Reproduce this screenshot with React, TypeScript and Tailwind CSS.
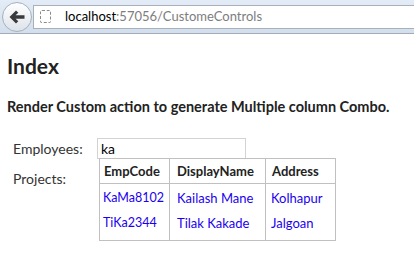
import React from "react";

const rows = [
  { code: "KaMa8102", name: "Kailash Mane", address: "Kolhapur" },
  { code: "TiKa2344", name: "Tilak Kakade", address: "Jalgoan" },
];

function BrowserBar() {
  return (
    <div className="relative flex h-[34px] items-center border-b border-[#a3acb6] bg-gradient-to-b from-[#e3ecf7] to-[#d3dfee]">
      <div className="ml-[33px] flex h-[24px] flex-1 items-center border-y border-l border-[#a8b0ba] bg-white">
        <div className="ml-[6px] h-[13px] w-[11px] rounded-[2px] border border-dashed border-[#8a8a8a]" />
        <span className="ml-[14px] text-[13px] text-black">
          localhost<span className="text-[#7d7d7d]">:57056/CustomeControls</span>
        </span>
      </div>
      <div className="absolute left-[2px] top-[2px] flex h-[30px] w-[30px] items-center justify-center rounded-full border border-[#a8b0ba] bg-gradient-to-b from-white to-[#dde3ea]">
        <svg width="16" height="14" viewBox="0 0 16 14">
          <path d="M0.5 7 L7 0.5 L9.3 2.8 L6.6 5.3 H15.5 V8.7 H6.6 L9.3 11.2 L7 13.5 Z" fill="#3a3a3a" />
        </svg>
      </div>
    </div>
  );
}

export default function App() {
  return (
    <div className="h-[261px] w-[414px] overflow-hidden bg-white font-['Lato','Open_Sans',sans-serif] text-[#222]">
      <BrowserBar />
      <main className="px-[7px]">
        <h1 className="mt-[20px] text-[21px] font-bold leading-[24px]">Index</h1>
        <p className="mt-[21px] text-[14.5px] font-bold leading-[16px]">
          Render Custom action to generate Multiple column Combo.
        </p>
        <div className="mt-[23px] ml-[6px] text-[14px]">
          <div className="flex h-[21px] items-center">
            <label className="w-[84px] text-[#333]">Employees:</label>
            <div className="relative">
              <div className="flex h-[21px] w-[149px] items-center border border-[#d3d3d3] px-[3px] text-[14px] text-black">ka</div>
              <table className="absolute left-[2px] top-[20px] z-10 w-[237px] table-fixed border-collapse border border-[#c0c0c0] bg-white text-[13px]">
                <thead>
                  <tr className="h-[25px] border-b border-[#c0c0c0]">
                    <th className="w-[70px] border-r border-[#c0c0c0] px-[4px] pt-[2px] text-left font-bold text-[#222]">EmpCode</th>
                    <th className="w-[96px] border-r border-[#c0c0c0] px-[7px] pt-[2px] text-left font-bold text-[#222]">DisplayName</th>
                    <th className="w-[70px] px-[6px] pt-[2px] text-left font-bold text-[#222]">Address</th>
                  </tr>
                </thead>
                <tbody>
                  {rows.map((r, i) => (
                    <tr key={r.code} className={i === rows.length - 1 ? "h-[31px] align-top" : "h-[26px]"}>
                      <td className="border-r border-[#c0c0c0] px-[3px] pt-[4px] text-[12.5px] text-[#1a00f0]">{r.code}</td>
                      <td className="border-r border-[#c0c0c0] px-[7px] pt-[4px] text-[#1a00f0]">{r.name}</td>
                      <td className="px-[5px] pt-[4px] text-[#1a00f0]">{r.address}</td>
                    </tr>
                  ))}
                </tbody>
              </table>
            </div>
          </div>
          <div className="mt-[9px] flex h-[21px] items-center text-[#333]">
            <label>Projects:</label>
          </div>
        </div>
      </main>
    </div>
  );
}
